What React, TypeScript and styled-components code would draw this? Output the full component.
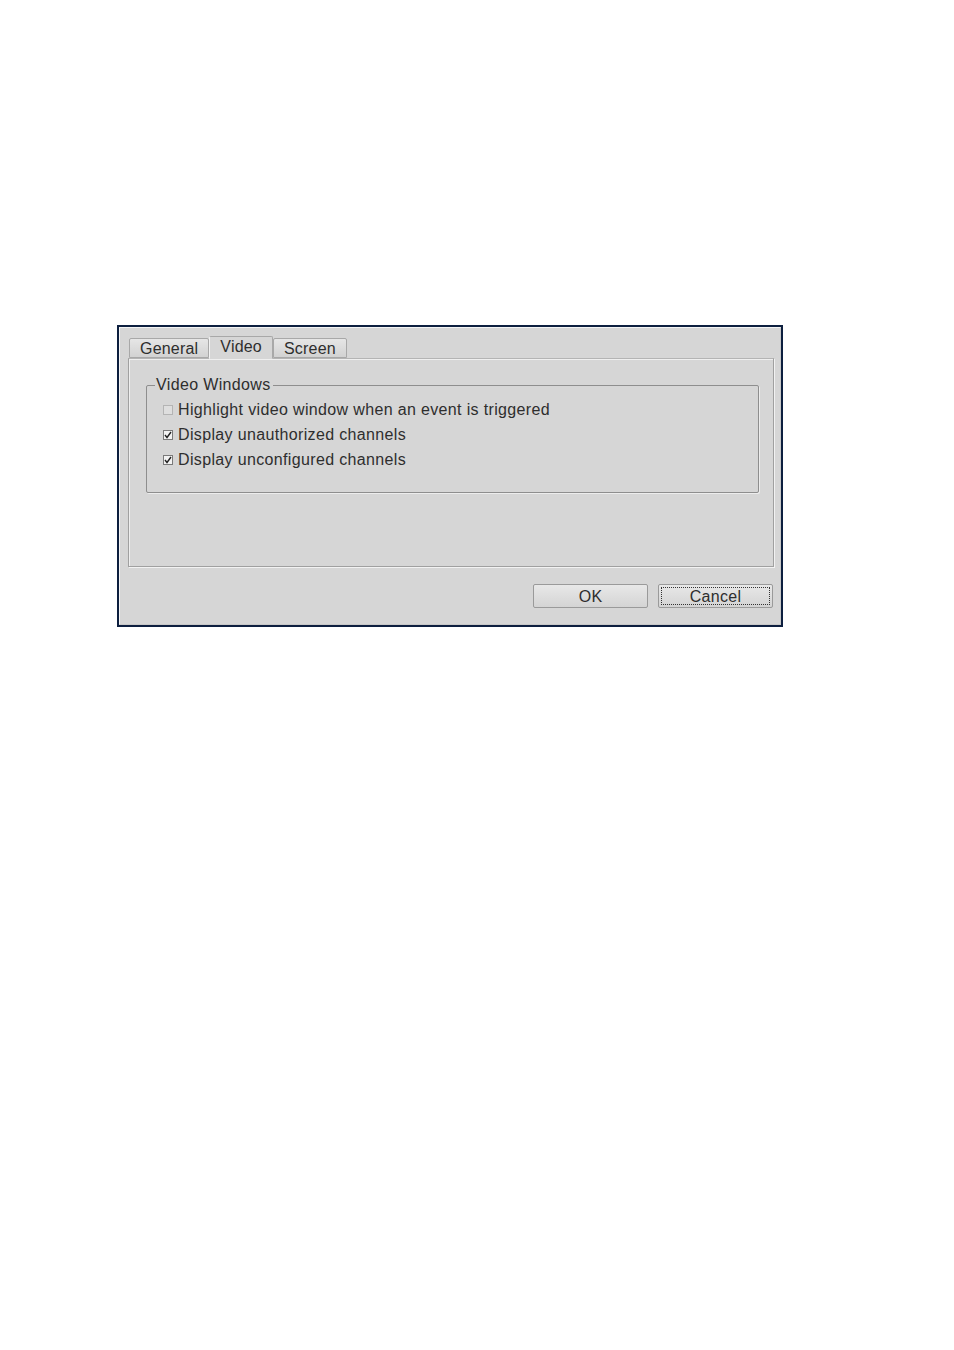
import styled, { createGlobalStyle } from 'styled-components';

const GlobalStyle = createGlobalStyle`
  html, body {
    margin: 0;
    padding: 0;
    background: #ffffff;
  }
  body {
    font-family: "Liberation Sans", Arial, sans-serif;
  }
`;

const Page = styled.div`
  width: 954px;
  height: 1350px;
  padding: 325px 0 0 117px;
  box-sizing: border-box;
`;

const Dialog = styled.div`
  width: 666px;
  height: 302px;
  box-sizing: border-box;
  border: 2px solid #0d1f3f;
  background: #d6d6d6;
  display: flex;
  flex-direction: column;
`;

const Inner = styled.div`
  flex: 1;
  border: 1px solid #f4f4f4;
  border-right-color: #c8c8c8;
  border-bottom-color: #c8c8c8;
  padding: 8px 6px 14px 8px;
  display: flex;
  flex-direction: column;
`;

const TabBar = styled.div`
  display: flex;
  align-items: flex-end;
  height: 22px;
  padding-left: 1px;
`;

const Tab = styled.div<{ $active?: boolean }>`
  height: ${(p) => (p.$active ? '23px' : '20px')};
  box-sizing: border-box;
  padding: 0 10px;
  margin-bottom: ${(p) => (p.$active ? '-1px' : '0')};
  border: 1px solid #a8a8a8;
  border-bottom: ${(p) => (p.$active ? '1px solid #d6d6d6' : '1px solid #a8a8a8')};
  border-left-color: ${(p) => (p.$active ? '#f2f2f2' : '#a8a8a8')};
  border-radius: 2px 2px 0 0;
  background: ${(p) =>
    p.$active ? '#d6d6d6' : 'linear-gradient(#e6e6e6, #d2d2d2)'};
  font-size: 16px;
  line-height: ${(p) => (p.$active ? '20px' : '19px')};
  color: #2e2e2e;
  letter-spacing: 0.2px;
  position: relative;
  z-index: ${(p) => (p.$active ? 2 : 1)};
`;

const Pane = styled.div`
  height: 209px;
  box-sizing: border-box;
  border: 1px solid #a0a0a0;
  border-top-color: #b4b4b4;
  box-shadow: inset 1px 1px 0 #efefef, 1px 1px 0 #f2f2f2;
  padding: 17px 14px 0 17px;
  position: relative;
  z-index: 1;
`;

const Group = styled.fieldset`
  margin: 0;
  padding: 3px 0 0 16px;
  height: 117px;
  box-sizing: border-box;
  border: 1px solid #8e8e8e;
  box-shadow: 1px 1px 0 #ededed;
  border-radius: 2px;
  min-width: 0;
`;

const Legend = styled.legend`
  padding: 0 2px 0 1px;
  margin-left: -8px;
  font-size: 16px;
  line-height: 18px;
  color: #2e2e2e;
  letter-spacing: 0.35px;
`;

const CheckRow = styled.label`
  display: flex;
  align-items: center;
  height: 25px;
  font-size: 16px;
  color: #2e2e2e;
  letter-spacing: 0.35px;
`;

const Box = styled.span<{ $disabled?: boolean }>`
  width: 10px;
  height: 10px;
  box-sizing: border-box;
  border: 1px solid ${(p) => (p.$disabled ? '#b4b4b4' : '#7a7a7a')};
  background: ${(p) => (p.$disabled ? '#dedede' : '#f2f2f2')};
  margin-right: 5px;
  display: flex;
  align-items: center;
  justify-content: center;
`;

const Footer = styled.div`
  display: flex;
  justify-content: flex-end;
  gap: 10px;
  margin-top: 17px;
  padding-right: 1px;
`;

const Button = styled.button<{ $focus?: boolean }>`
  width: 115px;
  height: 24px;
  box-sizing: border-box;
  border: 1px solid #9a9a9a;
  border-radius: 2px;
  background: linear-gradient(#e8e8e8, #d4d4d4);
  font-family: inherit;
  font-size: 16px;
  color: #2e2e2e;
  letter-spacing: 0.3px;
  padding: 2px 0 0;
  position: relative;
  ${(p) =>
    p.$focus &&
    `
    &::after {
      content: '';
      position: absolute;
      inset: 2px;
      border: 1px dotted #333;
    }
  `}
`;

const Check = () => (
  <svg width="8" height="8" viewBox="0 0 8 8">
    <path d="M1 4 L3 6.5 L7 1" fill="none" stroke="#222" strokeWidth="1.4" />
  </svg>
);

const options = [
  { label: 'Highlight video window when an event is triggered', checked: false, disabled: true },
  { label: 'Display unauthorized channels', checked: true, disabled: false },
  { label: 'Display unconfigured channels', checked: true, disabled: false },
];

export default function App() {
  return (
    <>
      <GlobalStyle />
      <Page>
        <Dialog>
          <Inner>
            <TabBar>
              <Tab>General</Tab>
              <Tab $active>Video</Tab>
              <Tab>Screen</Tab>
            </TabBar>
            <Pane>
              <Group>
                <Legend>Video Windows</Legend>
                {options.map((o) => (
                  <CheckRow key={o.label}>
                    <Box $disabled={o.disabled}>{o.checked && <Check />}</Box>
                    {o.label}
                  </CheckRow>
                ))}
              </Group>
            </Pane>
            <Footer>
              <Button>OK</Button>
              <Button $focus>Cancel</Button>
            </Footer>
          </Inner>
        </Dialog>
      </Page>
    </>
  );
}
